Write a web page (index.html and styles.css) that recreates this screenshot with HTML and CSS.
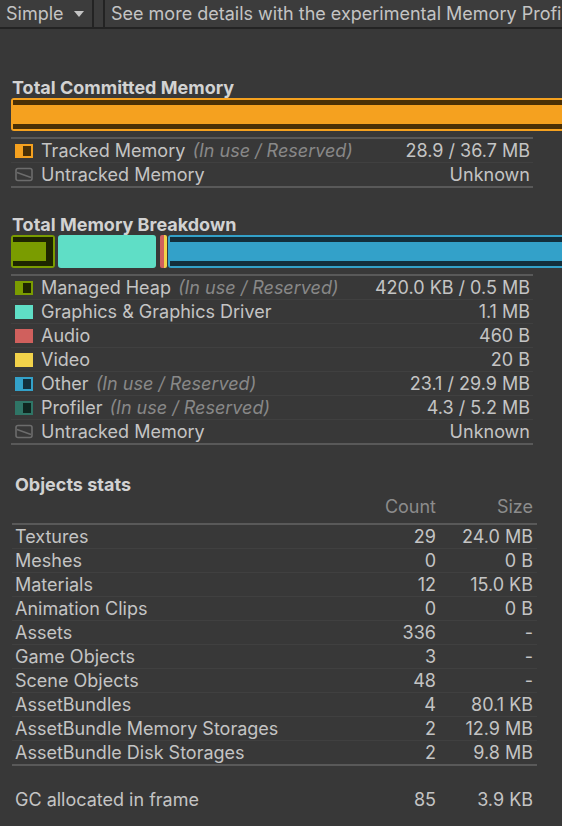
FILE: index.html
```html
<!DOCTYPE html>
<html>
<head>
<meta charset="utf-8">
<link rel="stylesheet" href="styles.css">
</head>
<body>
<div class="toolbar">
  <div class="dropdown">Simple <svg class="caret" width="10" height="6" viewBox="0 0 10 6"><path d="M0 0h10L5 6z" fill="#c4c4c4"/></svg></div>
  <div class="tb-spacer"></div>
  <div class="tb-msg">See more details with the experimental Memory Profiler package.</div>
</div>
<main class="content">
  <section class="group committed">
    <h2 class="title">Total Committed Memory</h2>
    <div class="bars">
      <div class="seg seg-committed" style="width:700px"><div class="reserved"><div class="used" style="width:100%"></div></div></div>
    </div>
    <div class="legend">
      <div class="row"><span class="swatch sw-orange split"><i></i></span><span class="label">Tracked Memory <em>(In use / Reserved)</em></span><span class="val">28.9 / 36.7 MB</span></div>
      <div class="row"><svg class="swatch" width="18" height="15" viewBox="0 0 18 15"><rect x="1" y="1.5" width="16" height="12" rx="2" fill="none" stroke="#6c6c6c" stroke-width="1.6"/><path d="M2 5.5L16 10.5" stroke="#6c6c6c" stroke-width="1.4"/></svg><span class="label">Untracked Memory</span><span class="val">Unknown</span></div>
    </div>
  </section>

  <section class="group breakdown">
    <h2 class="title">Total Memory Breakdown</h2>
    <div class="bars">
      <div class="seg seg-managed" style="width:44px"><div class="reserved"><div class="used" style="width:82%"></div></div></div>
      <div class="seg seg-gfx" style="width:98px"></div>
      <div class="pair"><div class="seg seg-audio"></div><div class="seg seg-video"></div></div>
      <div class="seg seg-other" style="width:520px"><div class="reserved"><div class="used" style="width:100%"></div></div></div>
    </div>
    <div class="legend">
      <div class="row"><span class="swatch sw-green split"><i></i></span><span class="label">Managed Heap <em>(In use / Reserved)</em></span><span class="val">420.0 KB / 0.5 MB</span></div>
      <div class="row"><span class="swatch sw-teal"></span><span class="label">Graphics &amp; Graphics Driver</span><span class="val">1.1 MB</span></div>
      <div class="row"><span class="swatch sw-red"></span><span class="label">Audio</span><span class="val">460 B</span></div>
      <div class="row"><span class="swatch sw-yellow"></span><span class="label">Video</span><span class="val">20 B</span></div>
      <div class="row"><span class="swatch sw-blue split"><i></i></span><span class="label">Other <em>(In use / Reserved)</em></span><span class="val">23.1 / 29.9 MB</span></div>
      <div class="row"><span class="swatch sw-prof split"><i></i></span><span class="label">Profiler <em>(In use / Reserved)</em></span><span class="val">4.3 / 5.2 MB</span></div>
      <div class="row"><svg class="swatch" width="18" height="15" viewBox="0 0 18 15"><rect x="1" y="1.5" width="16" height="12" rx="2" fill="none" stroke="#6c6c6c" stroke-width="1.6"/><path d="M2 5.5L16 10.5" stroke="#6c6c6c" stroke-width="1.4"/></svg><span class="label">Untracked Memory</span><span class="val">Unknown</span></div>
    </div>
  </section>

  <section class="objects">
    <h3 class="obj-title">Objects stats</h3>
    <div class="obj-head"><span></span><span class="num">Count</span><span class="num">Size</span></div>
    <div class="obj-table">
      <div class="obj-row"><span>Textures</span><span class="num">29</span><span class="num">24.0 MB</span></div>
      <div class="obj-row"><span>Meshes</span><span class="num">0</span><span class="num">0 B</span></div>
      <div class="obj-row"><span>Materials</span><span class="num">12</span><span class="num">15.0 KB</span></div>
      <div class="obj-row"><span>Animation Clips</span><span class="num">0</span><span class="num">0 B</span></div>
      <div class="obj-row"><span>Assets</span><span class="num">336</span><span class="num">-</span></div>
      <div class="obj-row"><span>Game Objects</span><span class="num">3</span><span class="num">-</span></div>
      <div class="obj-row"><span>Scene Objects</span><span class="num">48</span><span class="num">-</span></div>
      <div class="obj-row"><span>AssetBundles</span><span class="num">4</span><span class="num">80.1 KB</span></div>
      <div class="obj-row"><span>AssetBundle Memory Storages</span><span class="num">2</span><span class="num">12.9 MB</span></div>
      <div class="obj-row"><span>AssetBundle Disk Storages</span><span class="num">2</span><span class="num">9.8 MB</span></div>
    </div>
    <div class="obj-row gc"><span>GC allocated in frame</span><span class="num">85</span><span class="num">3.9 KB</span></div>
  </section>
</main>
</body>
</html>
```

FILE: styles.css
```css
html, body {
  margin: 0;
  padding: 0;
  background: #383838;
  overflow: hidden;
}
body {
  width: 562px;
  height: 826px;
  font-family: Inter, "Noto Sans", sans-serif;
  font-size: 18px;
  color: #c4c4c4;
}

/* toolbar */
.toolbar {
  display: flex;
  height: 27px;
  background: #3c3c3c;
  border-bottom: 2px solid #232323;
  white-space: nowrap;
  overflow: hidden;
}
.dropdown {
  flex: 0 0 auto;
  display: flex;
  align-items: center;
  gap: 10px;
  width: 86px;
  padding-left: 6px;
  border-right: 2px solid #232323;
  line-height: 27px;
}
.caret { margin-top: 1px; }
.tb-spacer {
  flex: 0 0 auto;
  width: 9px;
  border-right: 2px solid #232323;
}
.tb-msg {
  flex: 0 0 auto;
  padding-left: 6px;
  line-height: 27px;
  color: #c4c4c4;
}

/* content */
.content {
  padding-left: 11px;
}
.group { margin-top: 48px; }
.breakdown { margin-top: 26px; }
.title {
  margin: 0;
  padding-left: 1px;
  font-size: 18px;
  font-weight: 700;
  line-height: 21px;
  color: #d2d2d2;
}
.bars {
  display: flex;
  height: 33px;
  margin-bottom: 6px;
}
.seg {
  box-sizing: border-box;
  height: 33px;
  border-radius: 3px;
  padding: 2px 0 2px 2px;
  flex-shrink: 0;
}
.reserved {
  height: 100%;
  box-sizing: border-box;
  padding: 5px 0;
}
.used { height: 100%; }
.seg-committed { background: #f5a11f; padding-left: 2px; }
.seg-committed .reserved { background: #4a3006; }
.seg-committed .used { background: #f5a11f; }
.seg-managed { background: #7a9c00; padding-right: 2px; margin-right: 3px; }
.seg-managed .reserved { background: #1e2600; }
.seg-managed .used { background: #7a9c00; }
.seg-gfx { background: #5fdec6; margin-right: 4px; }
.pair { display: flex; flex-shrink: 0; margin-right: 1px; }
.seg-audio { width: 4px; background: #d0605d; border-radius: 2px 0 0 2px; padding: 0; }
.seg-video { width: 3px; background: #f2d24a; border-radius: 0 2px 2px 0; padding: 0; }
.seg-other { background: #33a1c9; }
.seg-other .reserved { background: #132f3c; }
.seg-other .used { background: #33a1c9; }

/* legend */
.legend {
  width: 522px;
  border-top: 2px solid #595959;
  border-bottom: 2px solid #595959;
}
.row {
  display: flex;
  align-items: center;
  height: 23px;
  padding: 0 3px 0 4px;
  border-top: 1px solid #404040;
}
.row:first-child { border-top: none; height: 23px; }
.swatch {
  flex: 0 0 18px;
  width: 18px;
  height: 14px;
  margin-right: 8px;
  box-sizing: border-box;
}
svg.swatch { height: 15px; }
.split {
  display: flex;
  justify-content: flex-end;
  padding: 2px;
}
.split i {
  display: block;
  width: 8px;
  height: 100%;
}
.sw-orange { background: #f5a11f; }
.sw-orange i { background: #4a3006; }
.sw-green { background: #7a9c00; }
.sw-green i { background: #1e2600; }
.sw-teal { background: #5fdec6; }
.sw-red { background: #d0605d; }
.sw-yellow { background: #f2d24a; }
.sw-blue { background: #33a1c9; }
.sw-blue i { background: #132f3c; }
.sw-prof { background: #2f7566; }
.sw-prof i { background: #0f2620; }
.label { flex: 1; white-space: nowrap; }
.label em { color: #888888; font-style: italic; margin-left: 2px; }
.val { text-align: right; white-space: nowrap; }

/* objects */
.objects { margin-top: 29px; }
.obj-title {
  margin: 0 0 0 4px;
  font-size: 18px;
  font-weight: 700;
  line-height: 21px;
  color: #d2d2d2;
}
.obj-head, .obj-row {
  display: grid;
  grid-template-columns: 1fr 60px 97px;
  padding: 0 4px 0 3px;
  align-items: center;
  white-space: nowrap;
}
.obj-head {
  width: 518px;
  margin-left: 1px;
  height: 23px;
  margin-bottom: 5px;
  color: #8c8c8c;
}
.num { text-align: right; }
.obj-table {
  width: 525px;
  margin-left: 1px;
  border-top: 2px solid #595959;
  border-bottom: 2px solid #595959;
}
.obj-table .obj-row {
  height: 23px;
  border-top: 1px solid #404040;
}
.obj-table .obj-row:first-child { border-top: none; height: 23px; }
.obj-row.gc {
  width: 518px;
  margin-left: 1px;
  height: 24px;
  margin-top: 21px;
}
```
